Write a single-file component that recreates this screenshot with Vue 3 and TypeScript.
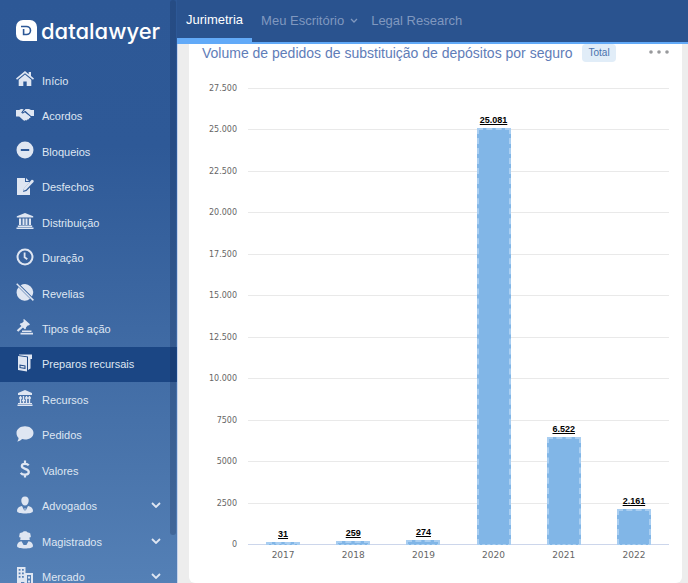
<script setup lang="ts">
interface MenuItem {
  label: string
  icon: string
  active?: boolean
  expandable?: boolean
}

interface Bar {
  year: number
  value: number
}

const menu: MenuItem[] = [
  { label: 'Início', icon: 'home' },
  { label: 'Acordos', icon: 'handshake' },
  { label: 'Bloqueios', icon: 'minus' },
  { label: 'Desfechos', icon: 'contract' },
  { label: 'Distribuição', icon: 'court' },
  { label: 'Duração', icon: 'clock' },
  { label: 'Revelias', icon: 'slash' },
  { label: 'Tipos de ação', icon: 'gavel' },
  { label: 'Preparos recursais', icon: 'folder', active: true },
  { label: 'Recursos', icon: 'appeal' },
  { label: 'Pedidos', icon: 'comment' },
  { label: 'Valores', icon: 'dollar' },
  { label: 'Advogados', icon: 'lawyer', expandable: true },
  { label: 'Magistrados', icon: 'judge', expandable: true },
  { label: 'Mercado', icon: 'market', expandable: true },
]

const axisMax = 27500
const ticks: number[] = Array.from({ length: 12 }, (_, i) => axisMax - i * 2500)

const bars: Bar[] = [
  { year: 2017, value: 31 },
  { year: 2018, value: 259 },
  { year: 2019, value: 274 },
  { year: 2020, value: 25081 },
  { year: 2021, value: 6522 },
  { year: 2022, value: 2161 },
]

const group = (n: number): string => String(n).replace(/\B(?=(\d{3})+$)/g, '.')
const tickLabel = (n: number): string => (n < 10000 ? String(n) : group(n))
const barHeight = (n: number): string => `${(n / axisMax) * 100}%`
</script>

<template>
  <div class="app">
    <aside class="sidebar">
      <a class="brand" href="#">
        <svg class="brand-mark" viewBox="0 0 21 21" aria-hidden="true">
          <path fill="#fff" d="M7 0h7a7 7 0 0 1 7 7v14H7a7 7 0 0 1-7-7V7a7 7 0 0 1 7-7z" />
          <path fill="none" stroke="#2d5896" stroke-width="1.600" d="M5 6.500h5.500a4 4 0 0 1 0 8H7.600V9" />
        </svg>
        <span class="brand-name">datalawyer</span>
      </a>
      <nav>
        <ul class="menu">
          <li v-for="item in menu" :key="item.label">
            <a href="#" class="menu-link" :class="{ active: item.active }">
              <svg class="menu-icon" viewBox="0 0 18 18" fill="currentColor" aria-hidden="true">
                <template v-if="item.icon === 'home'">
                  <path d="M9 1 0 8.600l1 1.200L9 3.200l8 6.600 1-1.200-3-2.500V2h-2.300v2.200z" />
                  <path d="M9 4.500 2.700 9.700V16h4.600v-4.500h3.400V16h4.600V9.700z" />
                </template>
                <template v-else-if="item.icon === 'handshake'">
                  <path d="M0 4h3.200L5 3l2.600.2L5.300 6.500c.8 1.400 2.400 1 3.500-.3l5.400 4.300c.8.9-.1 2.200-1.100 1.600.3 1.200-.8 1.900-1.600 1.200-.1 1.100-1.200 1.400-1.900.8-.5.900-1.500.8-2.200.2L3.200 10.500H0z" />
                  <path d="M18 4h-3l-2-1H9.500L6.400 6.200c.5.500 1.200.2 1.900-.6l1.200-.5 5.500 4.900H18z" />
                  <path d="M9.200 2.800 6 6.200c.7.900 1.900.5 2.900-.8l5.600 4.900" fill="none" stroke="#2d5896" stroke-width=".8" />
                </template>
                <path v-else-if="item.icon === 'minus'" fill-rule="evenodd" d="M9 .5a8.500 8.500 0 1 1 0 17 8.500 8.500 0 0 1 0-17zM4.800 8v2h8.400V8z" />
                <template v-else-if="item.icon === 'contract'">
                  <path d="M1 1h8v4h4v1L8 11.500 7 15l3.500-1L14 10.500V18H1z" />
                  <path d="M10 1l3 3h-3z" />
                  <path d="M15.500 3c1-1 3 .8 2 1.900L10 12.700l-2.600 1 .8-2.800z" />
                </template>
                <path v-else-if="item.icon === 'court'" d="M9 1 .8 4.300v1.200h16.400V4.300zM3 6.500h2.200V13H3zm3.500 0h2V13h-2zm3 0h2V13h-2zm3.300 0H15V13h-2.200zM1.800 13.600h14.400V15H1.800zM.5 15.600h17V17H.5z" />
                <template v-else-if="item.icon === 'clock'">
                  <circle cx="9" cy="9" r="7.500" fill="none" stroke="currentColor" stroke-width="2" />
                  <path d="M8.600 4.500V9.300l2.700 2" fill="none" stroke="currentColor" stroke-width="1.800" />
                </template>
                <template v-else-if="item.icon === 'slash'">
                  <path d="M4.600 2.300a8.200 8.200 0 0 1 11.300 11.200zM2.500 4.200a8.200 8.200 0 0 0 11.500 11.600z" />
                  <path d="M.7.700l16.700 16.700" stroke="currentColor" stroke-width="1.500" />
                </template>
                <template v-else-if="item.icon === 'gavel'">
                  <path d="M8 1l6 5.300-1.200 1.200-.8-.3-2.100 2.300.2.800L9 11.500 3.700 6.300 5 5l.8.300L8 3l-.9-.9z" />
                  <path d="M6.500 8.500 1.500 13" stroke="currentColor" stroke-width="2.200" />
                  <path d="M6 12.500h9.500V14H6zM4.500 14.800H17v1.700H4.500z" />
                </template>
                <template v-else-if="item.icon === 'folder'">
                  <path fill-rule="evenodd" d="M2 2l9 1.300V17.500L2 16zM3.500 10.500v3.500l6 1v-3.500zM4.500 11.700l4 .6v1.500l-4-.6z" />
                  <path d="M3 .5h13V5h-1.500v9.500L12 16V2.500L3 1.300z" />
                </template>
                <template v-else-if="item.icon === 'appeal'">
                  <path d="M9 1 2 4v2h14V4zM2 14h14v1H2zM1.500 15.600h15V17h-15z" />
                  <path d="M4.500 7v7M7.500 7v7M10.500 7v7M13.500 7v7M3 9h3M6 11.500h3M9 9h3M12 9h3" fill="none" stroke="currentColor" stroke-width="1.400" />
                </template>
                <path v-else-if="item.icon === 'comment'" d="M9 1.200c4.800 0 8.500 2.900 8.500 6.700s-3.700 6.600-8.500 6.600c-1 0-2-.1-2.900-.4C4.600 15.500 3 16.400 1 16.600c.9-1 1.500-2.200 1.600-3.700C1.200 11.600.5 9.900.5 7.900c0-3.800 3.700-6.700 8.500-6.700z" />
                <template v-else-if="item.icon === 'dollar'">
                  <path d="M12.700 5.300C11.500 3.500 6 2.900 5.800 6c-.1 3.300 7 2.400 7 6 0 3.400-6.500 3.300-8.100.8M9 .5v3M9 14.500v3" fill="none" stroke="currentColor" stroke-width="2.200" />
                </template>
                <template v-else-if="item.icon === 'lawyer'">
                  <path d="M9 .5c2.600 0 4 1.800 3.700 4.500-.3 2.500-1.600 4.500-3.700 4.500S5.600 7.500 5.300 5C5 2.300 6.400.5 9 .5z" />
                  <path d="M6 10l2.500 5 .1-3h.8l.1 3L12 10c3 .7 5 2 5 5 0 1.800-3.800 2.500-8 2.500S1 16.800 1 15c0-3 2-4.300 5-5z" />
                </template>
                <template v-else-if="item.icon === 'judge'">
                  <path d="M9 .3c1.300 0 2.100.4 2.700 1.100 2-.1 3.300 1 2.700 2.500 1.200 1.400.1 2.600-1 2.600l.4 2.500H4.200l.4-2.500c-1.100 0-2.200-1.200-1-2.600C3 2.400 4.300 1.300 6.300 1.400 6.900.7 7.700.3 9 .3z" />
                  <path d="M5.500 10.200 7.600 14h2.800l2.100-3.800c2.800.6 4.500 2 4.500 4.800 0 1.800-3.800 2.500-8 2.500S1 16.800 1 15c0-2.800 1.700-4.200 4.500-4.800z" />
                </template>
                <path v-else fill-rule="evenodd" d="M1 0h8.500v6H17v12h-2V8h-4v10H8.300v-3H5v3H1zM2.700 2v1.700h1.800V2zm3.300 0v1.700h1.800V2zM2.700 5.500v1.700h1.800V5.500zm3.300 0v1.700h1.800V5.500zM2.700 9v1.700h1.800V9zM6 9v1.700h1.800V9zm6 .5h2v2h-2zm0 4h2v2h-2z" />
              </svg>
              <span class="menu-label">{{ item.label }}</span>
              <svg v-if="item.expandable" class="chevron" viewBox="0 0 10 6" aria-hidden="true">
                <path d="M1 1l4 4 4-4" fill="none" stroke="currentColor" stroke-width="1.800" />
              </svg>
            </a>
          </li>
        </ul>
      </nav>
      <span class="scroll-thumb" aria-hidden="true"></span>
    </aside>

    <div class="content">
      <header class="topbar">
        <a href="#" class="tab current">Jurimetria</a>
        <a href="#" class="tab">
          Meu Escritório
          <svg class="tab-chevron" viewBox="0 0 8 5" aria-hidden="true">
            <path d="M1 1l3 3 3-3" fill="none" stroke="currentColor" stroke-width="1.300" />
          </svg>
        </a>
        <a href="#" class="tab">Legal Research</a>
      </header>

      <main class="page">
        <section class="card">
          <div class="card-head">
            <h1>Volume de pedidos de substituição de depósitos por seguro</h1>
            <span class="badge">Total</span>
            <button class="more" type="button" aria-label="Mais opções">
              <svg viewBox="0 0 20 4" aria-hidden="true">
                <circle cx="2" cy="2" r="1.800" />
                <circle cx="10" cy="2" r="1.800" />
                <circle cx="18" cy="2" r="1.800" />
              </svg>
            </button>
          </div>

          <div class="chart">
            <div class="y-axis">
              <div v-for="t in ticks" :key="t" class="tick"><span>{{ tickLabel(t) }}</span></div>
            </div>
            <div class="grid-lines">
              <i v-for="t in ticks" :key="t"></i>
            </div>
            <div class="bars">
              <div v-for="b in bars" :key="b.year" class="slot">
                <span class="value">{{ group(b.value) }}</span>
                <div class="bar" :style="{ height: barHeight(b.value) }"></div>
              </div>
            </div>
            <div class="x-axis">
              <span v-for="b in bars" :key="b.year">{{ b.year }}</span>
            </div>
          </div>
        </section>
      </main>
    </div>
  </div>
</template>

<style>
body {
  margin: 0;
  background: #ededed;
}
</style>

<style scoped>
.app {
  display: grid;
  grid-template-columns: 177px 1fr;
  height: 100vh;
  overflow: hidden;
  font-family: "Liberation Sans", Arial, sans-serif;
}

a {
  color: inherit;
  text-decoration: none;
}

.sidebar {
  position: relative;
  overflow: hidden;
  background: linear-gradient(#2d5896 0%, #2e5997 25%, #4a75ac 80%, #5480b6 100%);
  color: #dfe6f2;
}

.brand {
  display: flex;
  align-items: center;
  gap: 4px;
  height: 63px;
  padding: 0 0 2px 16px;
  box-sizing: border-box;
  color: #fff;
}

.brand-mark {
  flex: none;
  width: 21px;
  height: 21px;
}

.brand-name {
  font-family: Inter, Lato, sans-serif;
  font-feature-settings: "cv11";
  font-size: 22px;
  font-weight: 500;
  line-height: 28px;
}

.menu {
  display: grid;
  grid-auto-rows: 1fr;
  height: 532px;
  margin: 0;
  padding: 0;
  list-style: none;
}

.menu-link {
  display: flex;
  align-items: center;
  gap: 8px;
  height: 100%;
  padding: 0 16px;
  box-sizing: border-box;
  font-size: 11px;
}

.menu-link.active {
  background: #1b4684;
}

.menu-icon {
  flex: none;
  width: 18px;
  height: 18px;
  margin-bottom: 3px;
}

.menu-label {
  flex: 1;
  white-space: nowrap;
}

.chevron {
  width: 10px;
  height: 6px;
  margin-bottom: 2px;
}

.scroll-thumb {
  position: absolute;
  top: 0;
  right: 1px;
  bottom: 48px;
  width: 6px;
  border-radius: 3px;
  background: rgba(20, 40, 80, 0.25);
}

.content {
  display: flex;
  flex-direction: column;
  min-width: 0;
}

.topbar {
  display: flex;
  flex: none;
  height: 44px;
  box-sizing: border-box;
  background: linear-gradient(#2a538f 42px, #62aaf8 42px);
  color: #8098bf;
  font-size: 13px;
}

.tab {
  display: flex;
  align-items: center;
  gap: 6px;
  padding: 0 4px 4px 9px;
  box-sizing: border-box;
}

.tab.current {
  padding-right: 9px;
  padding-bottom: 0;
  border-bottom: 6px solid #62aaf8;
  color: #fff;
}

.tab-chevron {
  width: 8px;
  height: 5px;
}

.page {
  flex: 1;
  padding: 0 6px 0 11px;
  border-left: 1px solid #c6d3ec;
}

.card {
  height: 100%;
  box-sizing: border-box;
  padding: 0 13px;
  border-radius: 0 0 6px 6px;
  background: #fff;
}

.card-head {
  display: flex;
  align-items: center;
  gap: 10px;
  height: 18px;
}

h1 {
  margin: 0;
  color: #5f7db8;
  font-size: 14px;
  font-weight: 400;
  white-space: nowrap;
}

.badge {
  padding: 0 6px;
  border-radius: 4px;
  background: #e1edf8;
  color: #4a72ad;
  font-size: 10px;
  line-height: 18px;
}

.more {
  margin: 0 0 2px auto;
  padding: 0;
  border: 0;
  background: none;
  line-height: 0;
}

.more svg {
  width: 20px;
  height: 4px;
  fill: #98999c;
}

.chart {
  display: grid;
  grid-template-columns: 35px 1fr;
  grid-template-rows: 457px 20px;
  column-gap: 11px;
  margin-top: 26px;
}

.y-axis,
.grid-lines {
  display: flex;
  flex-direction: column;
  justify-content: space-between;
}

.y-axis {
  grid-area: 1 / 1;
  color: #666;
  font-family: "DejaVu Sans", sans-serif;
  font-size: 8px;
  text-align: right;
}

.tick {
  display: flex;
  align-items: center;
  justify-content: flex-end;
  height: 1px;
}

.grid-lines {
  grid-area: 1 / 2;
}

.grid-lines i {
  height: 1px;
  background: #e9e9e9;
}

.grid-lines i:last-child {
  background: #ccd6eb;
}

.bars,
.x-axis {
  display: grid;
  grid-template-columns: repeat(6, 1fr);
  justify-items: center;
}

.bars {
  grid-area: 1 / 2;
}

.slot {
  display: flex;
  flex-direction: column;
  align-items: center;
  justify-content: flex-end;
  height: 457px;
}

.value {
  color: #000;
  font-size: 9px;
  font-weight: 700;
  line-height: 16px;
  text-decoration: underline;
}

.bar {
  flex: none;
  width: 34px;
  min-height: 3px;
  box-sizing: border-box;
  border: 2px dashed #a9cef1;
  border-bottom-width: 1px;
  background: #81b6e7;
}

.x-axis {
  grid-area: 2 / 2;
  align-items: center;
  color: #666;
  font-family: "DejaVu Sans", sans-serif;
  font-size: 9px;
}
</style>
